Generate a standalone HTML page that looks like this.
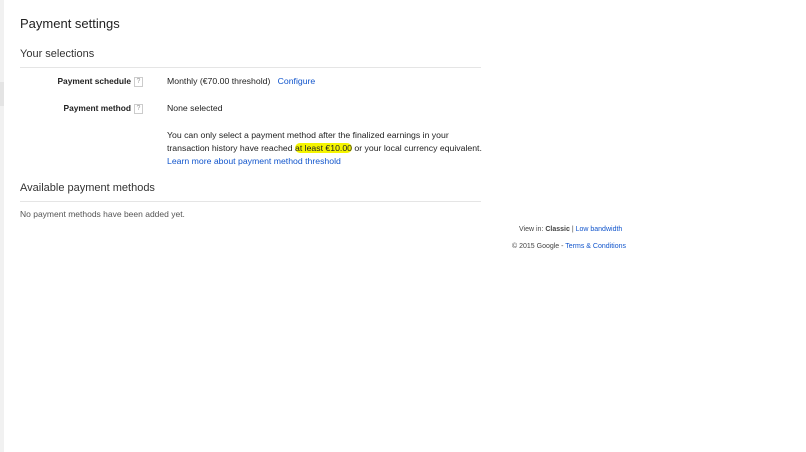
<!DOCTYPE html>
<html><head><meta charset="utf-8"><style>
body{margin:0;width:806px;height:452px;background:#fff;font-family:"Liberation Sans",Arial,sans-serif;position:relative;overflow:hidden;color:#222}
.a{position:absolute;white-space:nowrap}
.s{font-size:8.7px}
.lbl{font-weight:bold;text-align:right;width:143px;left:0;font-size:8.4px}
.q{display:inline-block;width:7px;height:8px;border:1px solid #ccc;font-size:7px;line-height:8px;text-align:center;color:#999;font-weight:normal;margin-left:3px;vertical-align:middle}
a{color:#1155cc;text-decoration:none}
.hr{position:absolute;left:20px;width:461px;height:1px;background:#e5e5e5}
</style></head><body>
<div style="position:absolute;left:0;top:0;width:4px;height:452px;background:#f1f1f1"></div>
<div style="position:absolute;left:0;top:82px;width:4px;height:24px;background:#e4e4e4"></div>
<div class="a" style="left:20px;top:16px;font-size:13px">Payment settings</div>
<div class="a" style="left:20px;top:48px;font-size:11px;color:#333">Your selections</div>
<div class="hr" style="top:67px"></div>
<div class="a s lbl" style="top:76px">Payment schedule<span class="q">?</span></div>
<div class="a s" style="left:167px;top:76px">Monthly (€70.00 threshold) &nbsp;&nbsp;<a>Configure</a></div>
<div class="a s lbl" style="top:103px">Payment method<span class="q">?</span></div>
<div class="a s" style="left:167px;top:103px">None selected</div>
<div class="a s" style="left:167px;top:129px;line-height:13px">You can only select a payment method after the finalized earnings in your<br>transaction history have reached <span style="background:#f5f500;border-radius:6px">at least €10.00</span> or your local currency equivalent.<br><a>Learn more about payment method threshold</a></div>
<div class="a" style="left:20px;top:182px;font-size:11px;color:#333">Available payment methods</div>
<div class="hr" style="top:201px"></div>
<div class="a s" style="left:20px;top:209px;color:#555;font-size:8.5px">No payment methods have been added yet.</div>
<div class="a" style="left:519px;top:226px;font-size:7px;color:#444">View in: <b>Classic</b> | <a>Low bandwidth</a></div>
<div class="a" style="left:512px;top:243px;font-size:7px;color:#444">© 2015 Google - <a>Terms &amp; Conditions</a></div>
</body></html>
